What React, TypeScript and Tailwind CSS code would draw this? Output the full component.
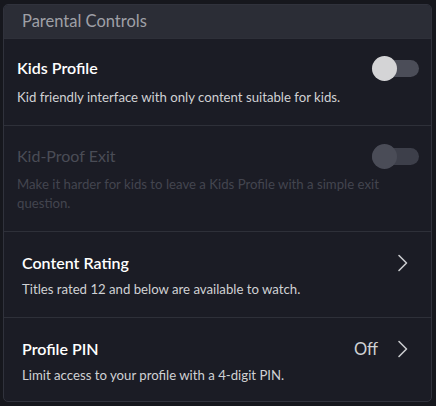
const font = { fontFamily: "Lato, 'Open Sans', sans-serif" };

function Toggle({ disabled }: { disabled?: boolean }) {
  return (
    <div className="relative h-[17px] w-[47px] shrink-0">
      <div className={`absolute inset-0 rounded-full ${disabled ? "bg-[#3d3f4a]" : "bg-[#4b4d58]"}`} />
      <div
        className={`absolute left-0 top-[-4px] h-[25px] w-[25px] rounded-full ${
          disabled ? "bg-[#4a4c57]" : "bg-[#d4d4d6]"
        }`}
      />
    </div>
  );
}

function Chevron() {
  return (
    <svg width="12" height="18" viewBox="0 0 12 18" fill="none" className="shrink-0">
      <path d="M2 1.5 L9.5 9 L2 16.5" stroke="#c9cacd" strokeWidth="1.6" strokeLinecap="round" strokeLinejoin="round" />
    </svg>
  );
}

export default function App() {
  return (
    <div className="min-h-screen w-[436px] bg-[#16171d] pl-[3px] pr-[4px] pt-[4px]" style={font}>
      <div className="overflow-hidden rounded-[5px] border border-[#30323c] bg-[#1b1c25]">
        {/* header */}
        <div className="flex h-[33px] items-center bg-[#2b2d36] px-[18px] text-[16.5px] text-[#9fa0a7]">
          Parental Controls
        </div>

        {/* Kids Profile */}
        <div className="border-t border-[#2e3039] pb-[18px] pl-[13px] pr-[12px] pt-[18px]">
          <div className="flex items-center justify-between">
            <span className="text-[16px] font-semibold leading-[22px] text-white">Kids Profile</span>
            <Toggle />
          </div>
          <p className="mt-[9px] text-[13.2px] leading-[19px] text-[#d0d1d4]">
            Kid friendly interface with only content suitable for kids.
          </p>
        </div>

        {/* Kid-Proof Exit */}
        <div className="border-t border-[#2e3039] pb-[18px] pl-[13px] pr-[12px] pt-[19px]">
          <div className="flex items-center justify-between">
            <span className="text-[16px] leading-[22px] text-[#4a4c56]">Kid-Proof Exit</span>
            <Toggle disabled />
          </div>
          <p className="mt-[8px] pr-[30px] text-[13.2px] leading-[19px] text-[#43454f]">
            Make it harder for kids to leave a Kids Profile with a simple exit question.
          </p>
        </div>

        {/* Content Rating */}
        <div className="border-t border-[#2e3039] pb-[18px] pl-[18px] pr-[22px] pt-[20px]">
          <div className="flex items-center justify-between">
            <span className="text-[16px] font-semibold leading-[22px] text-white">Content Rating</span>
            <Chevron />
          </div>
          <p className="mt-[6px] text-[13.2px] leading-[19px] text-[#d0d1d4]">
            Titles rated 12 and below are available to watch.
          </p>
        </div>

        {/* Profile PIN */}
        <div className="border-t border-[#2e3039] pb-[16px] pl-[18px] pr-[22px] pt-[20px]">
          <div className="flex items-center justify-between">
            <span className="text-[16px] font-semibold leading-[22px] text-white">Profile PIN</span>
            <div className="flex items-center gap-[19px]">
              <span className="text-[16.5px] leading-[22px] text-[#d0d1d4]">Off</span>
              <Chevron />
            </div>
          </div>
          <p className="mt-[6px] text-[13.2px] leading-[19px] text-[#d0d1d4]">
            Limit access to your profile with a 4-digit PIN.
          </p>
        </div>
      </div>
    </div>
  );
}
